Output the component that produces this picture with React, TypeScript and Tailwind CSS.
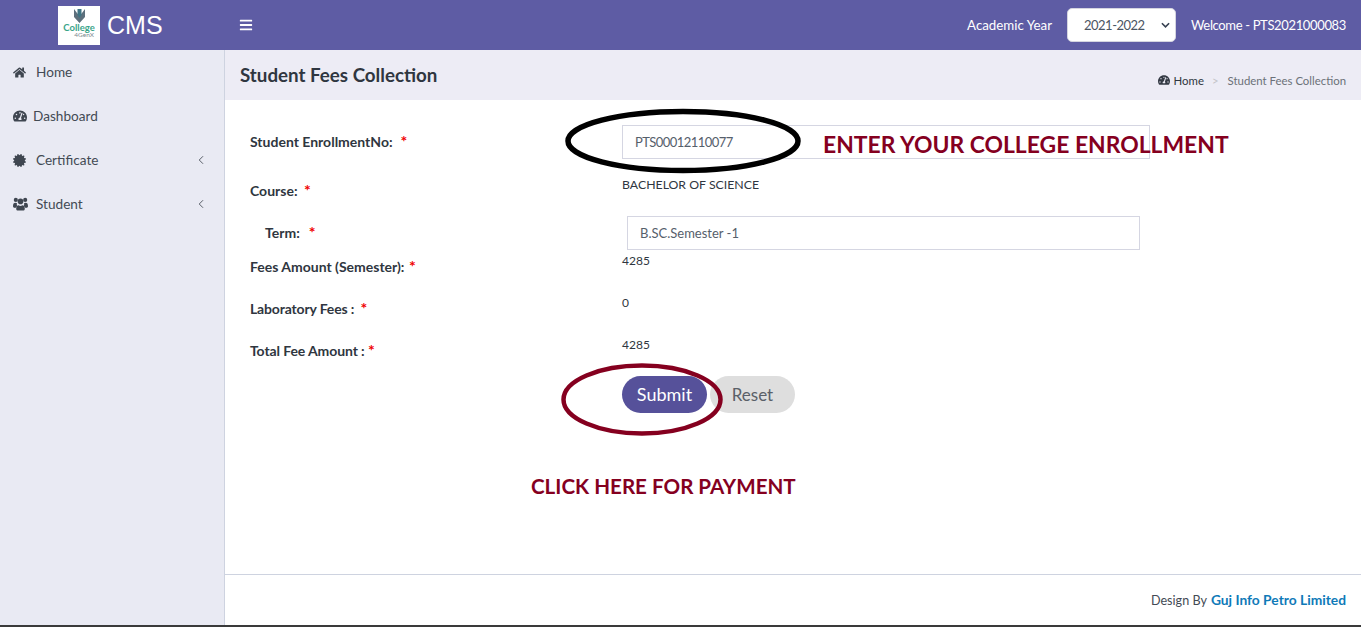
import React from 'react';
import { ChevronLeft } from 'lucide-react';
import { FaBars, FaCertificate, FaHome, FaTachometerAlt } from 'react-icons/fa';

// font awesome 5 users is too flat for this one, the old glyph is taller
function UsersIcon({ className }: { className?: string }) {
  return (
    <svg viewBox="0 0 16 14" fill="currentColor" className={className}>
      <circle cx="3" cy="2.6" r="2.2" />
      <circle cx="13" cy="2.6" r="2.2" />
      <circle cx="8" cy="4.2" r="3" />
      <path d="M0 9.4C0 6.8.8 5.6 2.6 5.6c.6 0 1.2.3 1.7.7-.4 1-.3 2.2.4 3.1-1 .3-1.8 1-2.2 1.8C1 11.2 0 10.8 0 9.4z" />
      <path d="M16 9.4c0-2.6-.8-3.8-2.6-3.8-.6 0-1.2.3-1.7.7.4 1 .3 2.2-.4 3.1 1 .3 1.8 1 2.2 1.8 1.5 0 2.5-.4 2.5-1.8z" />
      <path d="M3.4 12c0-2.2 1-3.6 2.6-3.6.6.5 1.3.8 2 .8s1.4-.3 2-.8c1.6 0 2.6 1.4 2.6 3.6 0 1.3-.8 2-2 2H5.4c-1.2 0-2-.7-2-2z" />
    </svg>
  );
}

const menu = [
  { label: 'Home', icon: FaHome, iconClass: 'w-[13px] h-[13px] mr-[10px]', arrow: false },
  { label: 'Dashboard', icon: FaTachometerAlt, iconClass: 'w-[14px] h-[14px] mr-[6px]', arrow: false },
  { label: 'Certificate', icon: FaCertificate, iconClass: 'w-[13px] h-[13px] mr-[10px]', arrow: true },
  { label: 'Student', icon: UsersIcon, iconClass: 'w-[15px] h-[14px] mr-[8px]', arrow: true },
];

function Req({ gap }: { gap: string }) {
  return <span className={`${gap} text-[16px] text-[#f00000]`}>*</span>;
}

function Logo() {
  return (
    <div className="w-[42px] h-[39px] bg-white flex flex-col items-center">
      <svg viewBox="0 0 11 14" className="w-[11px] h-[14px] mt-[3px]">
        <path d="M0 0l3 4 2.5 3L8 4l3-4v8l-5.5 6L0 8z" fill="#5d6f7c" />
        <path d="M3.5 0h4v6l-2 3-2-3z" fill="#3f7484" />
      </svg>
      <span className="text-[9.5px] leading-[8px] font-bold text-[#3ba58a] mt-[1px]">College</span>
      <span className="text-[6.5px] leading-[6px] text-[#7b8a8f] self-end mr-[6px]">4GenX</span>
    </div>
  );
}

export default function App() {
  return (
    <div className="relative h-[627px] overflow-hidden flex flex-col bg-white text-[13px] text-[#2f3640] font-['Lato','Liberation_Sans',sans-serif]">
      <header className="h-[50px] shrink-0 bg-[#5e5ca4] text-white flex items-center">
        <div className="w-[224px] flex items-center pl-[58px]">
          <Logo />
          <span className="ml-[7px] text-[25px] pt-[1px] font-['Liberation_Sans',sans-serif]">CMS</span>
        </div>
        <FaBars className="ml-[15px] w-[14px] h-[14px]" />
        <div className="ml-auto flex items-center pr-[15px]">
          <span className="text-[13.3px] pt-[2px]">Academic Year</span>
          <div className="relative ml-[15px] w-[109px] h-[34px] bg-white rounded-[5px] border border-[#d5d5e0] text-[#4b5563] flex items-center pl-[16px] pt-[2px] tracking-[-0.5px]">
            2021-2022
            <svg viewBox="0 0 10 6" className="absolute right-[5px] top-[13px] w-[9px] h-[6px]">
              <path d="M1 1l4 4 4-4" fill="none" stroke="#374151" strokeWidth="1.8" />
            </svg>
          </div>
          <span className="ml-[15px] pt-[2px] tracking-[-0.35px]">Welcome - PTS2021000083</span>
        </div>
      </header>

      <div className="flex-1 flex min-h-0">
        <aside className="w-[225px] shrink-0 bg-[#e9eaf3] border-r border-[#ced3e0] text-[13.6px] text-[#434a54]">
          {menu.map((item) => {
            const Icon = item.icon;
            return (
              <div key={item.label} className="h-[44px] flex items-center pl-[13px] pr-[16px]">
                <Icon className={`${item.iconClass} text-[#3f4650]`} />
                <span>{item.label}</span>
                {item.arrow && <ChevronLeft className="ml-auto w-[14px] h-[14px]" strokeWidth={1.5} />}
              </div>
            );
          })}
        </aside>

        <main className="flex-1 min-w-0 flex flex-col">
          <div className="h-[50px] shrink-0 bg-[#edecf5] flex items-center justify-between pl-[15px] pr-[15px]">
            <h1 className="text-[18.75px] font-bold text-[#2f3640] pt-[1px]">Student Fees Collection</h1>
            <div className="flex items-center text-[11.4px] mt-[11px]">
              <FaTachometerAlt className="w-[12px] h-[12px] mr-[4px] -mt-[1px] text-[#343a44]" />
              <span>Home</span>
              <span className="ml-[8px] mr-[9px] text-[#c4c4c8]">&gt;</span>
              <span className="text-[#6b7178]">Student Fees Collection</span>
            </div>
          </div>

          <div className="flex-1 pl-[25px] pt-[25px]">
            <div className="flex h-[34px]">
              <label className="w-[372px] text-[14px] font-bold flex items-center pb-[2px]">
                Student EnrollmentNo: <Req gap="ml-[8px]" />
              </label>
              <div className="w-[528px] h-[34px] border border-[#d5d6e2] flex items-center pl-[12px] pt-[2px] text-[#56606b] tracking-[-0.55px]">
                PTS00012110077
              </div>
            </div>
            <div className="flex h-[57px]">
              <label className="w-[372px] text-[14px] font-bold pt-[21px] leading-[20px]">
                Course: <Req gap="ml-[3px]" />
              </label>
              <div className="pt-[15px] leading-[21px] text-[12.3px]">BACHELOR OF SCIENCE</div>
            </div>
            <div className="flex h-[34px]">
              <label className="w-[377px] text-[14px] font-bold flex items-center pl-[15px] pb-[2px]">
                Term: <Req gap="ml-[9px]" />
              </label>
              <div className="w-[513px] h-[34px] border border-[#d5d6e2] flex items-center pl-[12px] pt-[2px] text-[#56606b]">
                B.SC.Semester -1
              </div>
            </div>
            <div className="flex h-[42px]">
              <label className="w-[372px] text-[14px] font-bold pt-[6px] leading-[20px]">
                Fees Amount (Semester): <Req gap="ml-[1px]" />
              </label>
              <div className="leading-[21px] text-[12px]">4285</div>
            </div>
            <div className="flex h-[42px]">
              <label className="w-[372px] text-[14px] font-bold pt-[6px] leading-[20px] tracking-[-0.15px]">
                Laboratory Fees : <Req gap="ml-[3px]" />
              </label>
              <div className="leading-[21px] text-[12px]">0</div>
            </div>
            <div className="flex h-[42px]">
              <label className="w-[372px] text-[14px] font-bold pt-[6px] leading-[20px] tracking-[-0.1px]">
                Total Fee Amount : <Req gap="ml-0" />
              </label>
              <div className="leading-[21px] text-[12px]">4285</div>
            </div>
            <div className="flex pl-[372px] gap-[3px]">
              <button className="w-[85px] h-[37px] rounded-full bg-[#56519a] text-white text-[18px]">Submit</button>
              <button className="w-[85px] h-[37px] rounded-full bg-[#dedede] text-[#5a6068] text-[17px]">Reset</button>
            </div>
          </div>

          <footer className="h-[51px] shrink-0 border-t border-[#ced3e0] flex items-center justify-end pr-[15px] pt-[1px]">
            <span className="text-[12.6px] pt-[1px] text-[#434a54]">Design By</span>
            <span className="ml-[4px] text-[13.8px] font-bold text-[#0f7ab8]">Guj Info Petro Limited</span>
          </footer>
        </main>
      </div>
      <div className="h-[2px] shrink-0 bg-[#3a3a3a]" />

      {/* hand-drawn annotations sitting on top of the screenshot */}
      <svg className="absolute left-0 top-0 pointer-events-none" width="1361" height="627">
        <ellipse cx="683" cy="141" rx="115" ry="29.5" fill="none" stroke="#000" strokeWidth="5.5" />
        <ellipse cx="642" cy="399.5" rx="78.5" ry="34" fill="none" stroke="#85001f" strokeWidth="4.5" />
      </svg>
      <span className="absolute left-[823px] top-[128px] text-[22.9px] leading-[32px] font-bold text-[#85001f]">
        ENTER YOUR COLLEGE ENROLLMENT
      </span>
      <span className="absolute left-[531px] top-[472px] text-[20.6px] leading-[28px] font-bold text-[#85001f]">
        CLICK HERE FOR PAYMENT
      </span>
    </div>
  );
}
